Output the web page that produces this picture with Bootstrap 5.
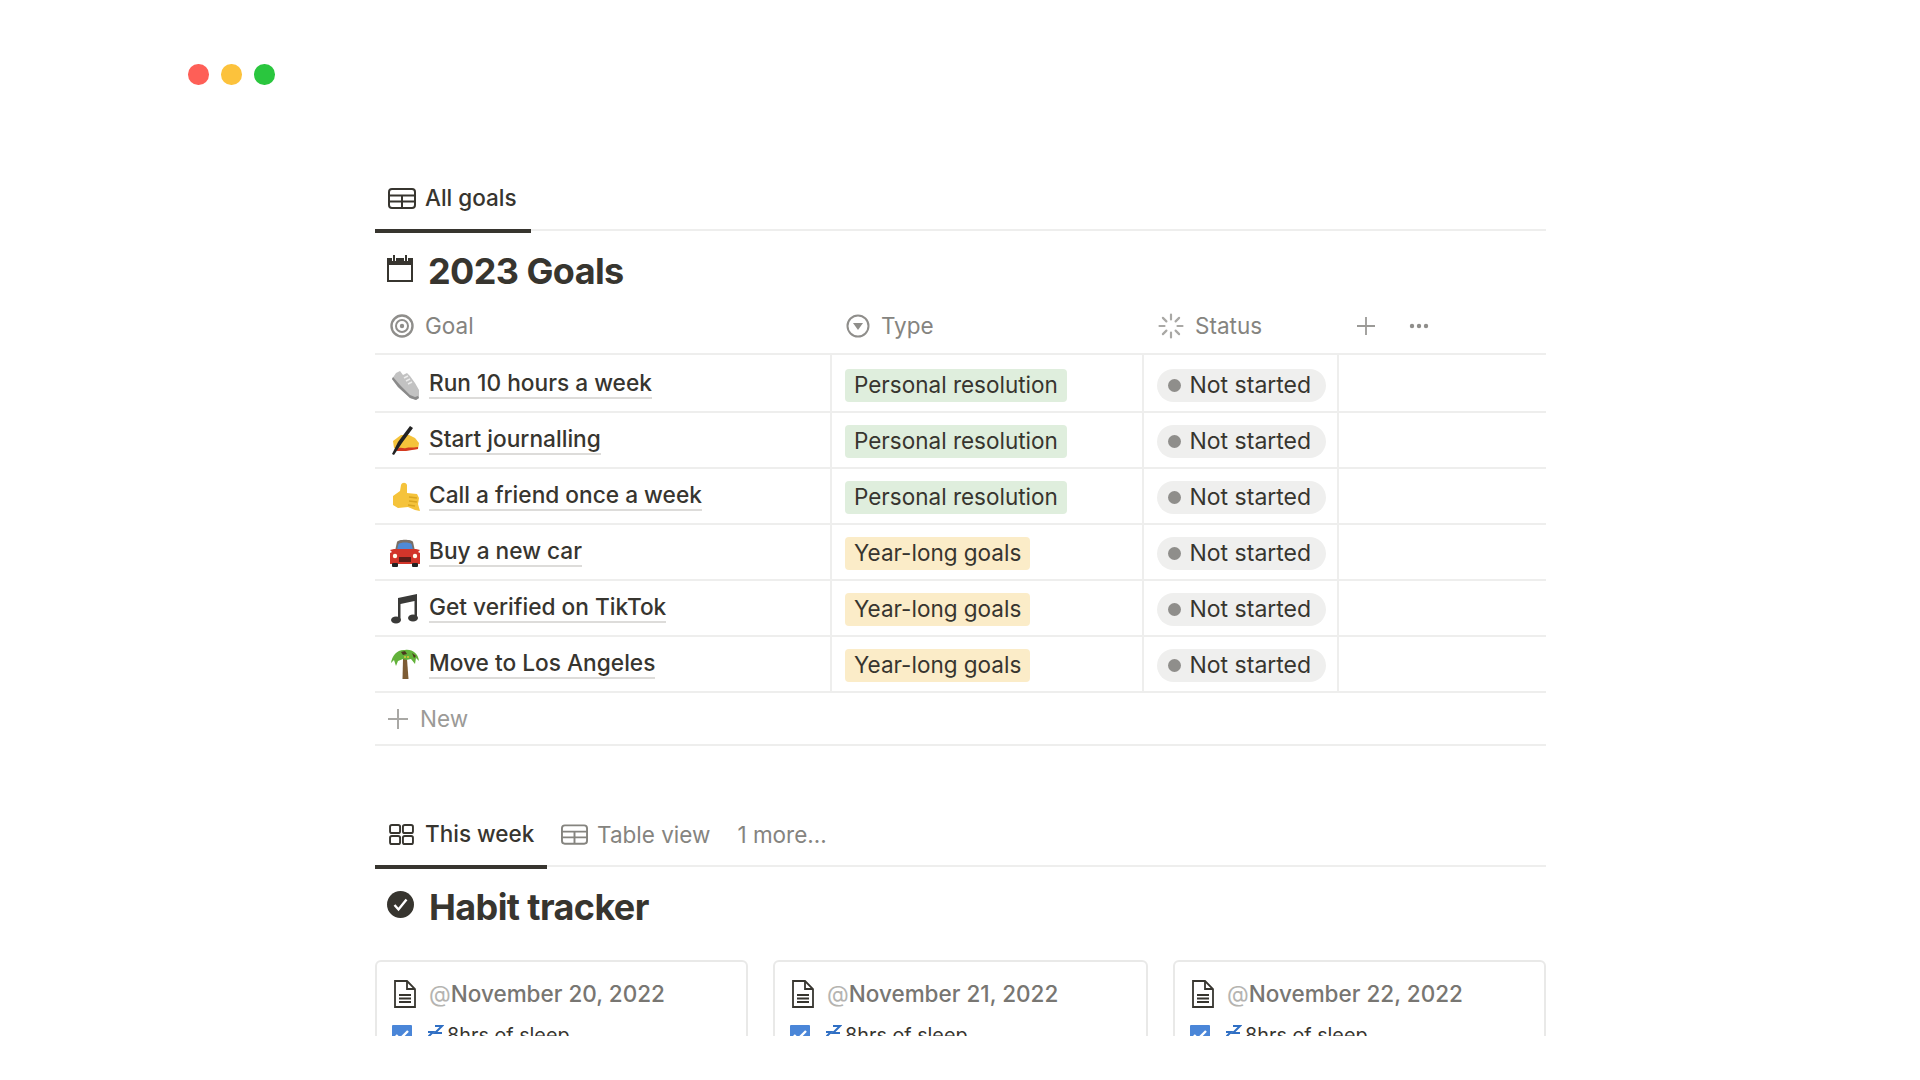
<!DOCTYPE html>
<html lang="en">
<head>
<meta charset="utf-8">
<title>2023 Goals</title>
<link href="https://cdn.jsdelivr.net/npm/bootstrap@5.3.0/dist/css/bootstrap.min.css" rel="stylesheet">
<style>
body{font-family:Inter,"Liberation Sans",sans-serif;color:#37352f;background:#fff;font-size:22.5px;margin:0}
.frame{height:1036px;overflow:hidden}
.lights{padding:64px 0 0 188px;height:186px;gap:12.500px}
.light{width:20.500px;height:20.500px;border-radius:50%}
.lred{background:#fe5f57}
.lyellow{background:#fcc23c}
.lgreen{background:#2ac63e}
.sheet{margin-left:375px;width:1171px}
.tabbar{border-bottom:2px solid #eeeeed;height:45px;gap:12px}
.tabitem{display:flex;align-items:center;gap:9px;padding:0 13px 20px;height:45px;white-space:nowrap}
.tabitem.on{border-bottom:4px solid #37352f;font-weight:500;margin-bottom:-2px;height:47px;padding-bottom:19px}
.tabitem.muted{color:#85847f;padding:0 0 20px 2px}
.tabmore{margin-left:13px}
.tabw1{width:156px}
.tabw2{width:172px;gap:11px;padding-left:14px}
.tabitem svg{flex:none}
.dbtitle{font-size:36px;font-weight:700;letter-spacing:-.6px;height:67px;padding:12px 0 0 12px;gap:15px;line-height:1}
.dbtitle svg{margin-top:-5px}
.gtable{table-layout:fixed;width:1171px;margin:0;border-collapse:separate;border-spacing:0;--bs-table-bg:transparent;--bs-table-color:#37352f}
.gtable th,.gtable td{padding:0 0 0 13px;vertical-align:middle;border:0;border-bottom:2px solid #eeeeed;border-right:2px solid #eeeeed;font-weight:400}
.gtable th{height:57px;color:#85847f;border-right:0;white-space:nowrap;padding-left:14px}
.gtable td{height:56px;white-space:nowrap}
.gtable tbody tr:first-child td{height:58px;padding-top:2px}
.gtable td:last-child{border-right:0}
.gtable td:first-child{padding-left:15px}
.gtable th:first-child{padding-left:15px}
.headcell{gap:11px}
.headtools{gap:34px;padding-left:4px}
.rowname{gap:9px}
.rowlabel{border-bottom:2px solid #dddcda;line-height:28px;margin-top:-1px;font-size:22.700px;font-weight:450}
.tagchip{display:inline-flex;align-items:center;padding:0 9px;height:33px;border-radius:4px;vertical-align:middle}
.tg{background:#dfeedd}
.ty{background:#fbecc8}
.pill{display:inline-flex;align-items:center;gap:8.500px;height:33px;border-radius:17px;background:#efefee;padding:0 15px 0 11px;font-size:23px;vertical-align:middle}
.pilldot{width:13px;height:13px;border-radius:50%;background:#8f8e8b}
.newrow{height:53px;border-bottom:2px solid #eeeeed;padding-left:13px;gap:12px;color:#9b9a97}
.gap2{height:76px}
.cardgrid{display:grid;grid-template-columns:373px 375px 373px;gap:25px;margin-top:26px}
.hcard{border:2px solid #e9e9e8;border-radius:6px;height:100px;padding:18px 16px 0 15px}
.hcardhead{gap:13px;color:#787672;font-weight:500;line-height:28px;margin-left:2px}
.at{color:#b5b4b1;font-weight:400}
.hcardline{gap:16px;margin-top:15px;font-size:19.800px;line-height:24px}
.hcardline svg{flex:none}
.sleeptext{margin-left:-13px}
</style>
</head>
<body>
<div class="frame">
  <div class="lights d-flex">
    <div class="light lred"></div>
    <div class="light lyellow"></div>
    <div class="light lgreen"></div>
  </div>
  <div class="sheet">
    <div class="tabbar d-flex">
      <div class="tabitem on tabw1">
        <svg width="28" height="21" viewBox="0 0 28 21" fill="none" stroke="#37352f" stroke-width="2"><rect x="1" y="1" width="26" height="19" rx="3"/><path d="M1 7.500h26M1 13.500h26M14 7.500V20"/></svg>
        <span>All goals</span>
      </div>
    </div>
    <div class="dbtitle d-flex align-items-center">
      <svg width="26" height="28" viewBox="0 0 26 28"><path d="M1 5h24v22H1z" fill="#fff" stroke="#37352f" stroke-width="2"/><path d="M1 4h24v7H1z" fill="#37352f"/><path d="M7 1v6M19 1v6" stroke="#fff" stroke-width="4"/><path d="M7 1v6M19 1v6" stroke="#37352f" stroke-width="2"/></svg>
      <span>2023 Goals</span>
    </div>
    <table class="table gtable">
      <colgroup><col style="width:457px"><col style="width:312px"><col style="width:195px"><col></colgroup>
      <thead>
        <tr>
          <th><div class="headcell d-flex align-items-center"><svg width="24" height="24" viewBox="0 0 24 24" fill="none" stroke="#8f8e8b"><circle cx="12" cy="12" r="10.500" stroke-width="2.400"/><circle cx="12" cy="12" r="6" stroke-width="2"/><circle cx="12" cy="12" r="2.200" fill="#8f8e8b" stroke="none"/></svg><span>Goal</span></div></th>
          <th><div class="headcell d-flex align-items-center"><svg width="24" height="24" viewBox="0 0 24 24" fill="none" stroke="#8f8e8b" stroke-width="2"><circle cx="12" cy="12" r="10.500"/><path d="M7 9h10l-5 7z" fill="#8f8e8b" stroke="none"/></svg><span>Type</span></div></th>
          <th><div class="headcell d-flex align-items-center"><svg width="26" height="26" viewBox="0 0 26 26" fill="none" stroke="#a9a8a5" stroke-width="2.200" stroke-linecap="round"><path d="M13 1.500v5M13 19.500v5M1.500 13h5M19.500 13h5M4.900 4.900l3.500 3.500M17.600 17.600l3.500 3.500M4.900 21.100l3.500-3.500M17.600 8.400l3.500-3.500"/></svg><span>Status</span></div></th>
          <th><div class="headtools d-flex align-items-center"><svg width="18" height="18" viewBox="0 0 18 18" stroke="#9b9a97" stroke-width="1.800"><path d="M9 0v18M0 9h18"/></svg><svg width="20" height="6" viewBox="0 0 20 6" fill="#8f8e8b"><circle cx="3" cy="3" r="2.200"/><circle cx="10" cy="3" r="2.200"/><circle cx="17" cy="3" r="2.200"/></svg></div></th>
        </tr>
      </thead>
      <tbody>
        <tr>
          <td><div class="rowname d-flex align-items-center">
            <svg width="30" height="32" viewBox="0 0 30 32"><path d="M2 11L6 5l4-2 3 4 4-2 3 3 5 7 4 7v8l-3 2-6-2L8 19z" fill="#c2c2c2"/><path d="M2 11l6 8 12 11 6 2 3-2-1-2-3 1-5-2L10 17 3 9z" fill="#8a8a8a"/><path d="M14 10l4-2M16 13l4-2M18 16l4-2" stroke="#ededed" stroke-width="1.500"/></svg>
            <span class="rowlabel">Run 10 hours a week</span></div></td>
          <td><span class="tagchip tg">Personal resolution</span></td>
          <td><span class="pill"><span class="pilldot"></span>Not started</span></td>
          <td></td>
        </tr>
        <tr>
          <td><div class="rowname d-flex align-items-center">
            <svg width="30" height="32" viewBox="0 0 30 32"><path d="M3 17l8-6 8 0 6 3 4 5-1 6-18 2-6-3z" fill="#f5c33b"/><path d="M7 25c4-3 6 0 9-1s6 0 12-1l0 2-12 2-9 0z" fill="#d43a20"/><path d="M20 2l3 2-11 15-8 12-2-1 6-12z" fill="#222"/></svg>
            <span class="rowlabel">Start journalling</span></div></td>
          <td><span class="tagchip tg">Personal resolution</span></td>
          <td><span class="pill"><span class="pilldot"></span>Not started</span></td>
          <td></td>
        </tr>
        <tr>
          <td><div class="rowname d-flex align-items-center">
            <svg width="30" height="32" viewBox="0 0 30 32"><path d="M11 5c1-3 5-3 6 0l0 8 10 1 2 4-1 6 2 7-5-1-7-3-10 1-5-3 0-9 7-5z" fill="#f5c33b"/><path d="M19 17l8 1M19 21l8 1M18 25l7 1" stroke="#d9a520" stroke-width="1.500"/></svg>
            <span class="rowlabel">Call a friend once a week</span></div></td>
          <td><span class="tagchip tg">Personal resolution</span></td>
          <td><span class="pill"><span class="pilldot"></span>Not started</span></td>
          <td></td>
        </tr>
        <tr>
          <td><div class="rowname d-flex align-items-center">
            <svg width="30" height="32" viewBox="0 0 30 32"><path d="M5 15l2-9c1-3 15-3 16 0l2 9z" fill="#7a6f66"/><path d="M7 14l1.500-6c2-2 11-2 13 0l1.500 6z" fill="#4f8ad6"/><path d="M0 14l4-1 22 0 4 1-2 2 2 1v11H0V17l2-1z" fill="#d2352a"/><rect x="2" y="27" width="6" height="4" rx="1" fill="#222"/><rect x="22" y="27" width="6" height="4" rx="1" fill="#222"/><rect x="9" y="21" width="12" height="5" fill="#5a1d18"/><circle cx="5" cy="20" r="2.200" fill="#ffe"/><circle cx="25" cy="20" r="2.200" fill="#ffe"/></svg>
            <span class="rowlabel">Buy a new car</span></div></td>
          <td><span class="tagchip ty">Year-long goals</span></td>
          <td><span class="pill"><span class="pilldot"></span>Not started</span></td>
          <td></td>
        </tr>
        <tr>
          <td><div class="rowname d-flex align-items-center">
            <svg width="30" height="32" viewBox="0 0 30 32" fill="#3a3a38"><path d="M8 6l19-4v24h-2.500V9L10.500 12V28H8z"/><ellipse cx="6" cy="28" rx="5" ry="3.500"/><ellipse cx="23" cy="26" rx="5" ry="3.500"/></svg>
            <span class="rowlabel">Get verified on TikTok</span></div></td>
          <td><span class="tagchip ty">Year-long goals</span></td>
          <td><span class="pill"><span class="pilldot"></span>Not started</span></td>
          <td></td>
        </tr>
        <tr>
          <td><div class="rowname d-flex align-items-center">
            <svg width="30" height="32" viewBox="0 0 30 32"><path d="M13 11h4l1.500 20h-6z" fill="#7d5c35"/><path d="M15 2c7-1 13 3 14 11l-3-3-1 6-4-5-5 1-3-1-5 2-2 5-2-6-3 3C2 7 8 1 15 2z" fill="#62b23a"/><path d="M11 4l4-1 2 3-4 1zM22 5l4 3-2 2z" fill="#4c3a1f"/><circle cx="15" cy="9" r="1" fill="#e2c33b"/><circle cx="18" cy="9" r="1" fill="#e2c33b"/></svg>
            <span class="rowlabel">Move to Los Angeles</span></div></td>
          <td><span class="tagchip ty">Year-long goals</span></td>
          <td><span class="pill"><span class="pilldot"></span>Not started</span></td>
          <td></td>
        </tr>
      </tbody>
    </table>
    <div class="newrow d-flex align-items-center">
      <svg width="20" height="20" viewBox="0 0 20 20" stroke="#a9a8a5" stroke-width="2"><path d="M10 0v20M0 10h20"/></svg>
      <span>New</span>
    </div>
    <div class="gap2"></div>
    <div class="tabbar d-flex">
      <div class="tabitem on tabw2">
        <svg width="25" height="21" viewBox="0 0 26 22" fill="none" stroke="#37352f" stroke-width="2"><rect x="1" y="1" width="10.500" height="8.500" rx="2"/><rect x="14.500" y="1" width="10.500" height="8.500" rx="2"/><rect x="1" y="12.500" width="10.500" height="8.500" rx="2"/><rect x="14.500" y="12.500" width="10.500" height="8.500" rx="2"/></svg>
        <span>This week</span>
      </div>
      <div class="tabitem muted">
        <svg width="27" height="21" viewBox="0 0 28 21" fill="none" stroke="#85847f" stroke-width="2"><rect x="1" y="1" width="26" height="19" rx="3"/><path d="M1 7.500h26M1 13.500h26M14 7.500V20"/></svg>
        <span>Table view</span>
      </div>
      <div class="tabitem muted tabmore"><span>1 more...</span></div>
    </div>
    <div class="dbtitle d-flex align-items-center">
      <svg width="27" height="27" viewBox="0 0 27 27"><circle cx="13.500" cy="13.500" r="13.500" fill="#37352f"/><path d="M7.500 14l4 4.500 8-10" fill="none" stroke="#fff" stroke-width="2.400"/></svg>
      <span>Habit tracker</span>
    </div>
    <div class="cardgrid">
      <div class="hcard">
        <div class="hcardhead d-flex align-items-center"><svg width="22" height="28" viewBox="0 0 22 28" fill="none" stroke="#37352f" stroke-width="1.800"><path d="M1 1h12l8 8v18H1z"/><path d="M13 1v8h8M5 15h12M5 18.500h12M5 22h12"/></svg><span><span class="at">@</span>November 20, 2022</span></div>
        <div class="hcardline d-flex align-items-center"><svg width="20" height="20" viewBox="0 0 20 20"><rect width="20" height="20" rx="1" fill="#4a86d8"/><path d="M4 10l4 4 8-8" fill="none" stroke="#fff" stroke-width="2.400"/></svg><svg width="16" height="22" viewBox="0 0 16 22" fill="none" stroke="#2f6fc4" stroke-width="2"><path d="M7 2h7l-7 7h7M0 8h5l-5 5h5"/></svg><span class="sleeptext">8hrs of sleep</span></div>
      </div>
      <div class="hcard">
        <div class="hcardhead d-flex align-items-center"><svg width="22" height="28" viewBox="0 0 22 28" fill="none" stroke="#37352f" stroke-width="1.800"><path d="M1 1h12l8 8v18H1z"/><path d="M13 1v8h8M5 15h12M5 18.500h12M5 22h12"/></svg><span><span class="at">@</span>November 21, 2022</span></div>
        <div class="hcardline d-flex align-items-center"><svg width="20" height="20" viewBox="0 0 20 20"><rect width="20" height="20" rx="1" fill="#4a86d8"/><path d="M4 10l4 4 8-8" fill="none" stroke="#fff" stroke-width="2.400"/></svg><svg width="16" height="22" viewBox="0 0 16 22" fill="none" stroke="#2f6fc4" stroke-width="2"><path d="M7 2h7l-7 7h7M0 8h5l-5 5h5"/></svg><span class="sleeptext">8hrs of sleep</span></div>
      </div>
      <div class="hcard">
        <div class="hcardhead d-flex align-items-center"><svg width="22" height="28" viewBox="0 0 22 28" fill="none" stroke="#37352f" stroke-width="1.800"><path d="M1 1h12l8 8v18H1z"/><path d="M13 1v8h8M5 15h12M5 18.500h12M5 22h12"/></svg><span><span class="at">@</span>November 22, 2022</span></div>
        <div class="hcardline d-flex align-items-center"><svg width="20" height="20" viewBox="0 0 20 20"><rect width="20" height="20" rx="1" fill="#4a86d8"/><path d="M4 10l4 4 8-8" fill="none" stroke="#fff" stroke-width="2.400"/></svg><svg width="16" height="22" viewBox="0 0 16 22" fill="none" stroke="#2f6fc4" stroke-width="2"><path d="M7 2h7l-7 7h7M0 8h5l-5 5h5"/></svg><span class="sleeptext">8hrs of sleep</span></div>
      </div>
    </div>
  </div>
</div>
<script src="https://cdn.jsdelivr.net/npm/bootstrap@5.3.0/dist/js/bootstrap.bundle.min.js"></script>
</body>
</html>
